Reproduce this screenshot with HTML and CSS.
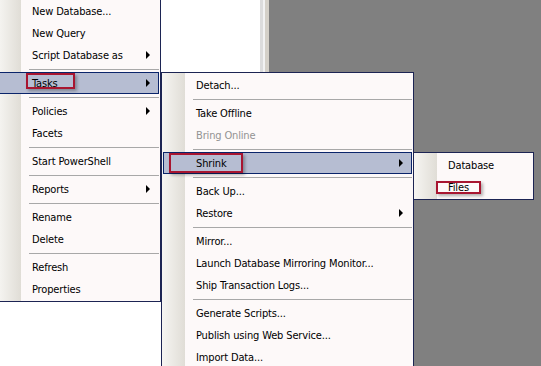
FILE: index.html
```html
<!DOCTYPE html>
<html lang="en">
<head>
    <meta charset="UTF-8">
    <title>Object Explorer - Tasks menu</title>
    <link rel="stylesheet" href="styles.css">
</head>
<body>

    <div class="workspace">
        <div class="explorer"></div>
        <div class="splitter"></div>
        <div class="document"></div>
    </div>

    <!-- database context menu -->
    <div class="menu menu-db">
        <div class="item">New Database...</div>
        <div class="item">New Query</div>
        <div class="item sub">Script Database as</div>
        <div class="sep"></div>
        <div class="item sub active">Tasks<span class="callout callout-tasks"></span></div>
        <div class="sep"></div>
        <div class="item sub">Policies</div>
        <div class="item">Facets</div>
        <div class="sep"></div>
        <div class="item">Start PowerShell</div>
        <div class="sep"></div>
        <div class="item sub">Reports</div>
        <div class="sep"></div>
        <div class="item">Rename</div>
        <div class="item">Delete</div>
        <div class="sep"></div>
        <div class="item">Refresh</div>
        <div class="item">Properties</div>
    </div>

    <!-- Tasks submenu -->
    <div class="menu menu-tasks">
        <div class="item">Detach...</div>
        <div class="sep"></div>
        <div class="item">Take Offline</div>
        <div class="item disabled">Bring Online</div>
        <div class="sep"></div>
        <div class="item sub active">Shrink<span class="callout callout-shrink"></span></div>
        <div class="sep"></div>
        <div class="item">Back Up...</div>
        <div class="item sub">Restore</div>
        <div class="sep"></div>
        <div class="item">Mirror...</div>
        <div class="item">Launch Database Mirroring Monitor...</div>
        <div class="item">Ship Transaction Logs...</div>
        <div class="sep"></div>
        <div class="item">Generate Scripts...</div>
        <div class="item">Publish using Web Service...</div>
        <div class="item">Import Data...</div>
    </div>

    <!-- Shrink submenu -->
    <div class="menu menu-shrink">
        <div class="item">Database</div>
        <div class="item">Files<span class="callout callout-files"></span></div>
    </div>

</body>
</html>
```

FILE: styles.css
```css
body {
    margin: 0;
    width: 541px;
    height: 366px;
    overflow: hidden;
    position: relative;
    font-family: "DejaVu Sans", "Liberation Sans", sans-serif;
    font-stretch: condensed;
    font-size: 11px;
    letter-spacing: -0.15px;
    color: #000;
}
.workspace {
    display: flex;
    height: 366px;
}
.explorer {
    width: 260px;
    background-color: #fff;
}
.splitter {
    width: 9px;
    background: linear-gradient(to right, #dcdcdc 0, #dcdcdc 3px, #f2f2f2 3px, #f2f2f2 5px, #d4d0c8 5px);
}
.document {
    flex: 1;
    background-color: #808080;
}

.menu {
    position: absolute;
    padding: 1px;
    border: 1px solid #1c2453;
    background: linear-gradient(to right, #f6f5f2 0, #e0ddd6 23px, #fdf9f9 23px);
}
.menu-db {
    left: -3px;
    top: -2px;
    width: 160px;
}
.menu-tasks {
    left: 161px;
    top: 72px;
    width: 249px;
}
.menu-shrink {
    left: 413px;
    top: 152px;
    width: 117px;
}

.item {
    position: relative;
    display: flex;
    align-items: center;
    height: 20px;
    padding: 0 8px 0 32px;
    border: 1px solid transparent;
    white-space: nowrap;
}
.item.sub::after {
    content: "";
    margin-left: auto;
    border-left: 4px solid #000;
    border-top: 4px solid transparent;
    border-bottom: 4px solid transparent;
}
.item.active {
    background-color: #b6bdd2;
    border-color: #0a246a;
}
.item.disabled {
    color: #939393;
}
.sep {
    height: 6px;
    margin-left: 30px;
    background: linear-gradient(#a8a8a8, #a8a8a8) no-repeat 0 3px / 100% 1px;
}

.callout {
    position: absolute;
    box-sizing: border-box;
    border: 2px solid #a81530;
    box-shadow: 2px 2px 3px rgba(0, 0, 0, 0.3);
}
.callout-tasks {
    left: 26px;
    top: 0;
    width: 49px;
    height: 16px;
}
.callout-shrink {
    left: 5px;
    top: 0;
    width: 74px;
    height: 20px;
}
.callout-files {
    left: 20px;
    top: 4px;
    width: 45px;
    height: 13px;
}
```
